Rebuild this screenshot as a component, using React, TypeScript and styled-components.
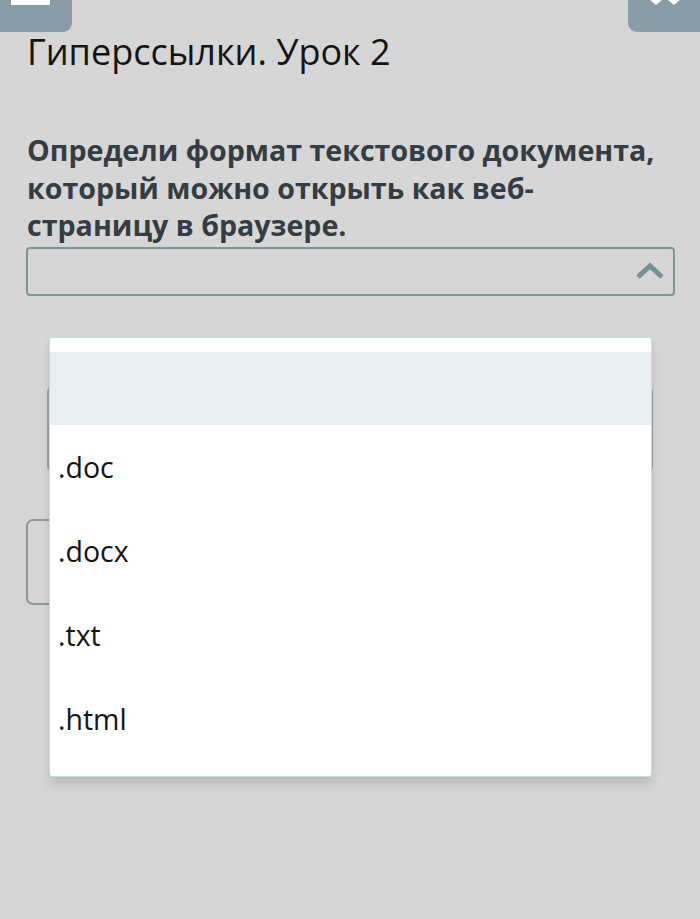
import React from "react";
import styled, { createGlobalStyle } from "styled-components";

const GlobalStyle = createGlobalStyle`
  html, body {
    margin: 0;
    padding: 0;
    background: #d6d6d6;
    overflow: hidden;
  }
  * { box-sizing: border-box; }
`;

const Page = styled.div`
  position: relative;
  width: 700px;
  height: 919px;
  background: #d6d6d6;
  font-family: "Open Sans", "Noto Sans", sans-serif;
  overflow: hidden;
`;

const TopBar = styled.div`
  display: flex;
  justify-content: space-between;
  height: 32px;
`;

const CornerButton = styled.div<{ $side: "left" | "right" }>`
  width: 72px;
  height: 32px;
  background: #8a9ca6;
  border-radius: ${(p) => (p.$side === "left" ? "0 0 9px 0" : "0 0 0 9px")};
  display: flex;
  justify-content: center;
  align-items: flex-start;
`;

const Title = styled.h1`
  margin: -2px 0 0 27px;
  font-size: 36px;
  font-weight: 400;
  line-height: 44px;
  color: #141414;
`;

const Question = styled.p`
  margin: 57px 0 0 27px;
  width: 660px;
  font-size: 28.6px;
  font-weight: 700;
  line-height: 37.5px;
  color: #333d43;
  font-stretch: 88%;
  white-space: nowrap;
`;

const SelectBox = styled.div`
  margin: 3px 0 0 26px;
  width: 649px;
  height: 49px;
  border: 2.5px solid #7d969a;
  border-radius: 4px;
  display: flex;
  align-items: center;
  justify-content: flex-end;
  padding-right: 8px;
`;

const Hidden = styled.div`
  margin: 90px 0 0 47px;
  width: 606px;
  height: 86px;
  border: 2px solid #9aa5a7;
  border-radius: 6px;
`;

const HiddenButton = styled.div`
  margin: 47px 0 0 26px;
  width: 120px;
  height: 86px;
  border: 2px solid #8e999b;
  border-radius: 7px;
`;

const Menu = styled.div`
  position: absolute;
  left: 49px;
  top: 337px;
  width: 603px;
  height: 440px;
  background: #ffffff;
  border: 1.5px solid #c6e0da;
  border-radius: 3px;
  box-shadow: 0 9px 10px rgba(0, 0, 0, 0.1), 0 0 4px rgba(0, 0, 0, 0.06);
  padding: 14px 0 15px;
  display: flex;
  flex-direction: column;
`;

const Option = styled.div<{ $active?: boolean; $h: number }>`
  height: ${(p) => p.$h}px;
  background: ${(p) => (p.$active ? "#e7eff1" : "transparent")};
  display: flex;
  align-items: center;
  padding-left: 8px;
  font-size: 28.5px;
  color: #151515;
`;

const options = [".doc", ".docx", ".txt", ".html"];

export default function App() {
  return (
    <Page>
      <GlobalStyle />
      <TopBar>
        <CornerButton $side="left">
          <svg width="72" height="6" viewBox="0 0 72 6">
            <rect x="11" y="0" width="39" height="5" fill="#ffffff" />
          </svg>
        </CornerButton>
        <CornerButton $side="right">
          <svg width="72" height="6" viewBox="0 0 72 6">
            <path d="M22 0 L28 5 L34 0 Z" fill="#ffffff" />
            <path d="M40 0 L46 5 L52 0 Z" fill="#ffffff" />
          </svg>
        </CornerButton>
      </TopBar>
      <Title>Гиперссылки. Урок 2</Title>
      <Question>
        Определи формат текстового документа,
        <br />
        который можно открыть как веб-
        <br />
        страницу в браузере.
      </Question>
      <SelectBox>
        <svg width="30" height="20" viewBox="0 0 30 20">
          <path
            d="M3 16 L15 5 L27 16"
            fill="none"
            stroke="#6e9296"
            strokeWidth="5"
            strokeLinejoin="miter"
          />
        </svg>
      </SelectBox>
      <Hidden />
      <HiddenButton />
      <Menu>
        <Option $active $h={73} />
        {options.map((o) => (
          <Option key={o} $h={84}>
            {o}
          </Option>
        ))}
      </Menu>
    </Page>
  );
}
